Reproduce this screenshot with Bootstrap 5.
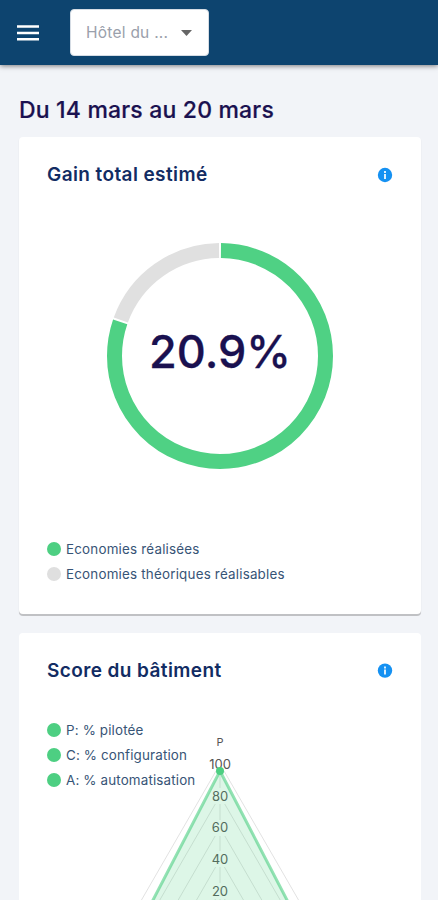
<!DOCTYPE html>
<html lang="fr">
<head>
<meta charset="utf-8">
<meta name="viewport" content="width=device-width, initial-scale=1">
<title>Gain total estimé</title>
<link href="https://cdn.jsdelivr.net/npm/bootstrap@5.3.0/dist/css/bootstrap.min.css" rel="stylesheet">
<style>
  body { font-family: Inter, "Liberation Sans", sans-serif; background: #f2f4f8; color: #1a1150; }
  .topbar { height: 65px; background: #0d446f; box-shadow: 0 1px 5px rgba(0,0,0,.5); padding: 0 17px; }
  .menu-btn { width: 23px; height: 24px; }
  .site-select { width: 139px; height: 47px; margin-left: 30px; padding: 0 16px 0 15px; border: 1px solid #d5dce4; border-radius: 4px; color: #9aa0ab; font-size: 15.5px; letter-spacing: .25px; }
  .content-wrap { margin: 0 1px 0 3px; }
  .period { font-size: 23px; font-weight: 500; line-height: 28px; margin: 31px 0 13px; letter-spacing: .18px; -webkit-text-stroke: .2px; }
  .panel { border: 0; border-radius: 4px; padding: 26px 28px 0; box-shadow: 0 1px 1px 1px rgba(0,0,0,.02), 0 2px 0 #c4c5c8; }
  .gain { height: 477px; margin-bottom: 19px; }
  .score { height: 267px; border-radius: 4px 4px 0 0; box-shadow: none; }
  .panel-title { font-size: 19px; font-weight: 600; line-height: 24px; color: #122c63; letter-spacing: .4px; }
  .legend-item { height: 25.4px; gap: 5px; font-size: 13.4px; color: #375476; letter-spacing: .2px; }
  .score .legend-item { letter-spacing: .15px; }
  .dot { width: 14px; height: 14px; border-radius: 50%; background: #4dcf82; }
  .dot-muted { background: #dfdfdf; }
  .donut { margin-top: 55px; }
  .gain .legend-list { margin-top: 66px; }
  .score .legend-list { margin-top: 34px; }
  .radar { left: 0; top: 0; }
</style>
</head>
<body>
<nav class="topbar d-flex align-items-center">
  <button class="menu-btn btn p-0 border-0 d-flex align-items-center" aria-label="Menu">
    <svg width="23" height="16" viewBox="0 0 23 16"><path d="M0 1.5h22M0 8h22M0 14.3h22" stroke="#fff" stroke-width="2.4"/></svg>
  </button>
  <button class="site-select bg-white d-flex align-items-center justify-content-between">
    <span>Hôtel du ...</span>
    <svg width="11" height="6" viewBox="0 0 11 6"><path d="M0 0h11L5.5 6z" fill="#666"/></svg>
  </button>
</nav>
<main class="ps-3 pe-3">
  <div class="content-wrap">
    <h1 class="period">Du 14 mars au 20 mars</h1>
    <section class="card panel gain">
      <div class="d-flex justify-content-between align-items-center">
        <h2 class="panel-title m-0">Gain total estimé</h2>
        <svg class="info" width="16" height="16" viewBox="0 0 16 16"><circle cx="8" cy="8" r="7.2" fill="#1591f2"/><path d="M8 4v2M8 7v5" stroke="#fff" stroke-width="1.7"/></svg>
      </div>
      <svg class="donut align-self-center" width="228" height="228" viewBox="-114 -114 228 228">
        <g fill="none" stroke-width="15" transform="rotate(-90)">
          <circle r="105.5" stroke="#4fd184" pathLength="100" stroke-dasharray="80.1 19.9" stroke-dashoffset="-.15"/>
          <circle r="105.5" stroke="#e0e0e0" pathLength="100" stroke-dasharray="19.3 80.7" stroke-dashoffset="-80.55"/>
        </g>
        <text x="0" y="11.5" text-anchor="middle" font-size="45" font-weight="500" fill="#1a1150" stroke="#1a1150" stroke-width=".3">20.9%</text>
      </svg>
      <div class="legend-list">
        <div class="legend-item d-flex align-items-center"><span class="dot"></span>Economies réalisées</div>
        <div class="legend-item d-flex align-items-center"><span class="dot dot-muted"></span>Economies théoriques réalisables</div>
      </div>
    </section>
    <section class="card panel score position-relative overflow-hidden">
      <div class="d-flex justify-content-between align-items-center">
        <h2 class="panel-title m-0">Score du bâtiment</h2>
        <svg class="info" width="16" height="16" viewBox="0 0 16 16"><circle cx="8" cy="7.6" r="7.2" fill="#1591f2"/><path d="M8 3.6v2M8 6.6v5" stroke="#fff" stroke-width="1.7"/></svg>
      </div>
      <div class="legend-list">
        <div class="legend-item d-flex align-items-center"><span class="dot"></span>P: % pilotée</div>
        <div class="legend-item d-flex align-items-center"><span class="dot"></span>C: % configuration</div>
        <div class="legend-item d-flex align-items-center"><span class="dot"></span>A: % automatisation</div>
      </div>
      <svg class="radar position-absolute" width="402" height="267" viewBox="19 633 402 267">
        <g fill="none" stroke="#e2e2e2" stroke-width="1">
          <path d="M220 764L357.700 1002.500H82.300z"/>
          <path d="M220 795.800L330.200 986.600H109.800z"/>
          <path d="M220 827.600L302.600 970.700H137.400z"/>
          <path d="M220 859.400L275.100 954.800H164.900z"/>
          <path d="M220 891.200L247.500 938.900H192.500z"/>
          <path d="M220 764V923L357.700 1002.500M220 923L82.300 1002.500"/>
        </g>
        <g fill="#fff"><path d="M209 757h22v14h-22zM211 788h18v16h-18zM211 820h18v16h-18zM211 851h18v16h-18zM211 883h18v16h-18z"/></g>
        <g font-size="13" fill="#555" text-anchor="middle">
          <text x="220" y="746" font-size="11">P</text>
          <text x="220" y="769">100</text><text x="220" y="800.500">80</text><text x="220" y="832">60</text><text x="220" y="864">40</text><text x="220" y="895.500">20</text>
        </g>
        <path d="M220 771L328 979H112z" fill="#4dcf82" fill-opacity=".19" stroke="#4dcf82" stroke-opacity=".6" stroke-width="3"/>
        <circle cx="220" cy="771" r="4" fill="#4dcf82"/>
      </svg>
    </section>
  </div>
</main>
<script src="https://cdn.jsdelivr.net/npm/bootstrap@5.3.0/dist/js/bootstrap.bundle.min.js"></script>
</body>
</html>
